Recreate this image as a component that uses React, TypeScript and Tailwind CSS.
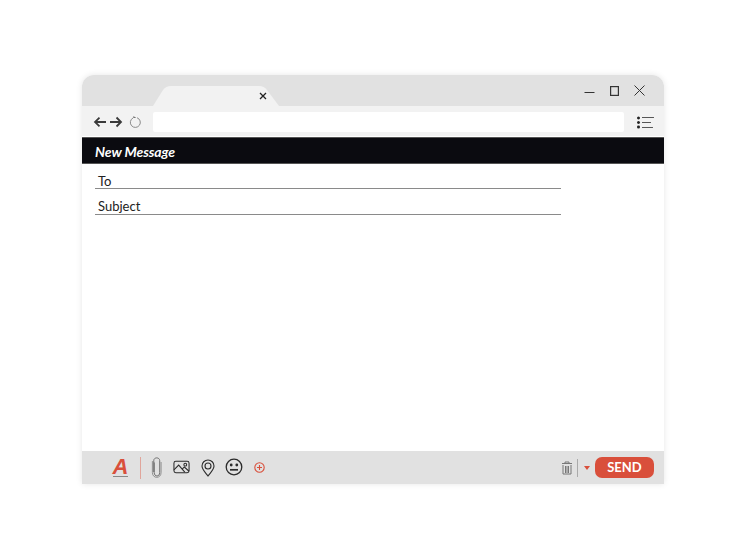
import React from 'react';

const BackArrow: React.FC<{ flip?: boolean }> = ({ flip }) => (
  <svg width="14" height="12" viewBox="0 0 14 12" className={flip ? '-scale-x-100' : ''} fill="none" stroke="#3a3a3a" strokeWidth="1.8">
    <path d="M13 6H2M6.500 1.500L2 6l4.500 4.500" />
  </svg>
);

const ToolIcons = () => (
  <>
    <svg width="11" height="23" viewBox="0 0 12 24" fill="none" stroke="#666" strokeWidth="1" className="ml-[10px]">
      <path d="M3.500 6.500v11c0 5 6 5 6 0V4.500c0-4-6.500-4-6.500 0V17" />
      <path d="M1.500 5v12.500c0 7 9.500 7 9.500 0V6" stroke="#888" />
    </svg>
    <svg width="17" height="14" viewBox="0 0 18 14" fill="none" stroke="#2b2b2b" strokeWidth="1.100" className="ml-[11px] -mt-[1px]">
      <rect x="1" y="1" width="16" height="12" rx="2" />
      <path d="M1 10l5-5 6.500 7.500M9.500 9.500l2.500-2.500 5 4.500" />
      <circle cx="13" cy="4.500" r="1.500" />
    </svg>
    <svg width="14" height="18" viewBox="0 0 14 18" fill="none" stroke="#2b2b2b" strokeWidth="1.100" className="ml-[11px]">
      <path d="M7 17C4 13 1 10.500 1 7a6 6 0 0 1 12 0c0 3.500-3 6-6 10z" />
      <circle cx="7" cy="7" r="3" />
    </svg>
    <svg width="18" height="18" viewBox="0 0 18 18" fill="none" stroke="#2b2b2b" className="ml-[10px] -mt-[1px]">
      <circle cx="9" cy="9" r="7.800" strokeWidth="1.300" />
      <circle cx="6.200" cy="7" r="1.400" fill="#2b2b2b" stroke="none" />
      <circle cx="11.800" cy="7" r="1.400" fill="#2b2b2b" stroke="none" />
      <path d="M5 11.800h8" strokeWidth="1.700" />
    </svg>
    <svg width="11" height="11" viewBox="0 0 11 11" fill="none" stroke="#d94f3b" strokeWidth="1.100" className="ml-[11px] -mt-[1px]">
      <circle cx="5.500" cy="5.500" r="4.700" />
      <path d="M5.500 3v5M3 5.500h5" />
    </svg>
  </>
);

const App: React.FC = () => {
  return (
    <div className="w-[740px] h-[558px] bg-white pt-[75px] pl-[82px]" style={{ fontFamily: 'Lato, sans-serif' }}>
      <div className="w-[582px] h-[409px] flex flex-col rounded-t-[12px] overflow-hidden bg-white shadow-[0_0_6px_rgba(0,0,0,0.10)]">
        {/* title bar */}
        <div className="h-[31px] shrink-0 bg-[#e1e1e1] flex items-end pl-[71px]">
          <div className="relative w-[126px] h-[20px]">
            <svg width="126" height="20" viewBox="0 0 126 20" className="block">
              <path d="M0 20L10 4Q13 0 18 0H106Q111 0 114 4L126 20Z" fill="#f2f2f2" />
            </svg>
            <span className="absolute left-[106px] top-[6px] leading-none">
              <svg width="8" height="8" viewBox="0 0 8 8" stroke="#222" strokeWidth="1.300" className="block"><path d="M1 1l6 6M7 1L1 7" /></svg>
            </span>
          </div>
          <div className="ml-auto mr-[19px] self-start mt-[10px] flex items-center">
            <svg width="11" height="11" viewBox="0 0 11 11" stroke="#333" strokeWidth="1"><path d="M0.500 7.500h10" /></svg>
            <svg width="9" height="10" viewBox="0 0 9 10" fill="none" stroke="#333" strokeWidth="1.200" className="ml-[15px]"><rect x="0.600" y="0.600" width="7.800" height="8.800" /></svg>
            <svg width="11" height="11" viewBox="0 0 11 11" stroke="#333" strokeWidth="1" className="ml-[15px]"><path d="M0.500 0.500l10 10M10.500 0.500l-10 10" /></svg>
          </div>
        </div>

        {/* address bar */}
        <div className="h-[30px] shrink-0 bg-[#f2f2f2] flex items-center pl-[11px] pr-[10px] pt-[2px]">
          <BackArrow />
          <span className="ml-[2px] flex"><BackArrow flip /></span>
          <svg width="13" height="13" viewBox="0 0 13 13" fill="none" stroke="#8a8a8a" strokeWidth="1" className="ml-[6px]">
            <path d="M8 1.700A5 5 0 1 1 4 2" />
            <path d="M4 1L6.500 1.500" stroke="#555" />
          </svg>
          <div className="ml-[11px] w-[472px] h-[20px] bg-white rounded-[2px]" />
          <svg width="17" height="13" viewBox="0 0 17 13" className="ml-[13px]" stroke="#555" strokeWidth="1">
            <circle cx="1.500" cy="2" r="1.500" fill="#222" stroke="none" />
            <circle cx="1.500" cy="6.500" r="1.500" fill="#222" stroke="none" />
            <circle cx="1.500" cy="11" r="1.500" fill="#222" stroke="none" />
            <path d="M5 1.500h12M5 6.500h9M5 11.500h11" />
          </svg>
        </div>

        {/* header */}
        <div className="mt-[1px] h-[27px] shrink-0 bg-[#0b0b10] border-y border-[#555] flex items-center pl-[13px] pt-[2px] text-white text-[14px] font-bold italic tracking-[-0.1px]">
          New Message
        </div>

        {/* fields */}
        <div className="flex-1 pl-[13px] pt-[8px]">
          <div className="w-[466px] h-[17px] border-b border-[#8a8a8a] pl-[3px] text-[13px] leading-[18px] text-[#222]">To</div>
          <div className="mt-[8px] w-[466px] h-[18px] border-b border-[#8a8a8a] pl-[3px] text-[13px] leading-[18px] text-[#222]">Subject</div>
        </div>

        {/* footer */}
        <div className="h-[33px] shrink-0 bg-[#e1e1e1] flex items-center pl-[31px] pr-[10px]">
          <div className="w-[15px] -mt-[1px] border-b border-[#888] text-[22px] leading-[19px] font-bold italic text-[#d94f3b] flex justify-center" style={{ fontFamily: '"Liberation Sans", sans-serif' }}>A</div>
          <div className="ml-[12px] w-px h-[22px] bg-[#e0a59b]" />
          <ToolIcons />
          <svg width="12" height="14" viewBox="0 0 12 14" fill="none" stroke="#777" strokeWidth="1" className="ml-auto">
            <path d="M1 2.500h10M4 2.500V1h4v1.500M2 4v9h8V4M4.500 5v7M6 5v7M7.500 5v7" />
          </svg>
          <div className="ml-[4px] w-px h-[18px] bg-[#aaa]" />
          <svg width="6" height="4" viewBox="0 0 6 4" className="ml-[6px]"><path d="M0 0h6L3 4z" fill="#d94f3b" /></svg>
          <div className="ml-[5px] w-[59px] h-[21px] rounded-[7px] bg-[#d94f3b] flex items-center justify-center text-white text-[13px] font-bold">SEND</div>
        </div>
      </div>
    </div>
  );
};

export default App;
